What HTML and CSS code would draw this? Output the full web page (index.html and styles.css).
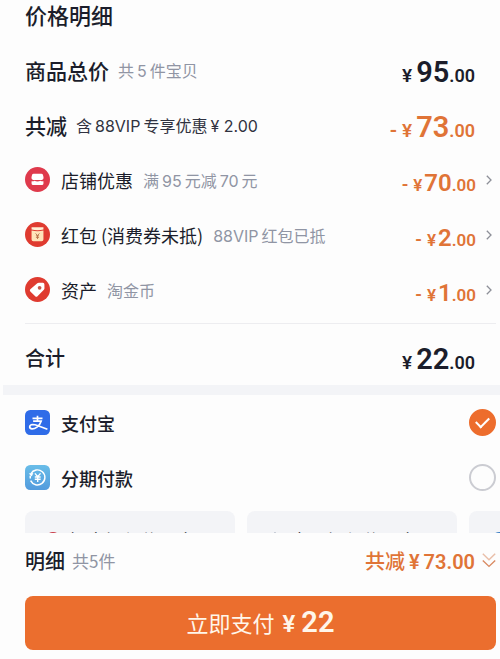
FILE: index.html
```html
<!DOCTYPE html>
<html lang="zh-CN">
<head>
<meta charset="utf-8">
<meta name="viewport" content="width=device-width, initial-scale=1">
<title>价格明细</title>
<link rel="stylesheet" href="styles.css">
</head>
<body>
<main class="content">
  <section class="prices">
    <h1 class="title">价格明细</h1>
    <div class="row">
      <span class="label">商品总价</span>
      <span class="note">共<span class="latin">5</span>件宝贝</span>
      <span class="price"><span class="yen">¥</span><span class="whole">95</span><span class="cents">.00</span></span>
    </div>
    <div class="row">
      <span class="label">共减</span>
      <span class="note note-dark">含<span class="latin">88VIP</span>专享优惠<span class="latin">¥ 2.00</span></span>
      <span class="price accent"><span class="minus">-</span><span class="yen">¥</span><span class="whole">73</span><span class="cents">.00</span></span>
    </div>
    <button class="row item" type="button">
      <svg class="icon" viewBox="0 0 24 24" aria-hidden="true">
        <circle cx="12" cy="12" r="12" fill="#df3a4c"/>
        <path d="M8.300 6.400h7.400q1.200 0 1.500 1.100l.6 2.400q.3 2.300-1.500 2.500H7.700q-1.800-.2-1.500-2.500l.6-2.400q.3-1.100 1.500-1.100z" fill="#fff"/>
        <path d="M6.300 13.600q1.500.4 2.800-.4 1.300.8 2.900.8t2.900-.8q1.300.8 2.800.4v2.200q0 1.500-1.500 1.500H7.800q-1.500 0-1.500-1.500z" fill="#fff"/>
      </svg>
      <span class="name">店铺优惠</span>
      <span class="note">满<span class="latin">95</span>元减<span class="latin">70</span>元</span>
      <span class="price accent"><span class="minus">-</span><span class="yen">¥</span><span class="whole">70</span><span class="cents">.00</span></span>
      <svg class="chevron" viewBox="0 0 6 10" aria-hidden="true"><path d="M.8.8 5 5 .8 9.200"/></svg>
    </button>
    <button class="row item" type="button">
      <svg class="icon" viewBox="0 0 24 24" aria-hidden="true">
        <circle cx="12" cy="12" r="12" fill="#df3b30"/>
        <path d="M6.300 5h11.400v2.200q-5.700 1.500-11.400 0z" fill="#fff0d6"/>
        <path d="M6.300 8.200q5.700 1.500 11.400 0v8.600q0 1.700-1.700 1.700H8q-1.700 0-1.700-1.700z" fill="#ffe4ba"/>
        <path d="m10.200 11 1.800 2 1.800-2M12 13v3.300M10.500 13.200h3M10.500 14.700h3" fill="none" stroke="#b9734a" stroke-width=".9"/>
      </svg>
      <span class="name">红包<span class="paren">(消费券未抵)</span></span>
      <span class="note"><span class="latin first">88VIP</span>红包已抵</span>
      <span class="price accent"><span class="minus">-</span><span class="yen">¥</span><span class="whole">2</span><span class="cents">.00</span></span>
      <svg class="chevron" viewBox="0 0 6 10" aria-hidden="true"><path d="M.8.8 5 5 .8 9.200"/></svg>
    </button>
    <button class="row item" type="button">
      <svg class="icon" viewBox="0 0 24 24" aria-hidden="true">
        <circle cx="12" cy="12" r="12" fill="#df3b30"/>
        <path d="M11.800 6q.6-.6 1.400-.6l4 .1q1.400.1 1.400 1.400l.1 4q0 .8-.6 1.400l-6.100 6.200q-1.100 1-2.200 0l-4.700-4.700q-1-1.100 0-2.100z" fill="#fff"/>
        <circle cx="14" cy="10.400" r="1.800" fill="#c8574b"/>
      </svg>
      <span class="name">资产</span>
      <span class="note">淘金币</span>
      <span class="price accent"><span class="minus">-</span><span class="yen">¥</span><span class="whole">1</span><span class="cents">.00</span></span>
      <svg class="chevron" viewBox="0 0 6 10" aria-hidden="true"><path d="M.8.8 5 5 .8 9.200"/></svg>
    </button>
    <div class="row total">
      <span class="label">合计</span>
      <span class="price"><span class="yen">¥</span><span class="whole">22</span><span class="cents">.00</span></span>
    </div>
  </section>

  <section class="methods">
    <label class="row method">
      <svg class="icon" viewBox="0 0 24 24" aria-hidden="true">
        <rect width="24" height="24" rx="5" fill="#2f6ce8"/>
        <path d="M7.200 8h9.600M12 5.400v5.200M7.800 10.700h7.700q-1.200 3.600-4 5.700-2.500 1.800-4.800 1.700-2.300-.2-2.200-2 .2-2 2.700-2.200 2.200 0 5.300 1.300 4.500 1.700 9 3.300" fill="none" stroke="#fff" stroke-width="1.600"/>
      </svg>
      <span class="name strong">支付宝</span>
      <input class="radio" type="radio" name="method" checked>
    </label>
    <label class="row method">
      <svg class="icon" viewBox="0 0 24 24" aria-hidden="true">
        <defs><linearGradient id="sky" x1="0" y1="0" x2="0" y2="1"><stop offset="0" stop-color="#69bde8"/><stop offset="1" stop-color="#529bdd"/></linearGradient></defs>
        <rect width="24" height="24" rx="5" fill="url(#sky)"/>
        <path d="M5.600 8.400A7.200 7.200 0 1 1 5.400 15M5.100 12.900 5 10.200" fill="none" stroke="#fff" stroke-width="1.400"/>
        <path d="M3.600 8.100 8 7.700 6.500 11z" fill="#fff"/>
        <path d="m9.500 8 2.700 3.300L14.900 8M12.200 11.200v5M9.400 11.500h5.600M9.400 13.700h5.600" fill="none" stroke="#fff" stroke-width="1.300"/>
      </svg>
      <span class="name strong">分期付款</span>
      <input class="radio" type="radio" name="method">
    </label>
    <div class="cards">
      <button class="card" type="button">
        <svg class="bank" viewBox="0 0 14 14" aria-hidden="true"><circle cx="7" cy="7" r="7" fill="#c83c48"/></svg>
        招商银行信用卡
        <svg class="chevron" viewBox="0 0 6 10" aria-hidden="true"><path d="M.8.8 5 5 .8 9.200"/></svg>
      </button>
      <button class="card" type="button">
        <svg class="bank" viewBox="0 0 14 14" aria-hidden="true"><path d="M7 0 9 5h5v2H9v7H5V7H2V5h3z" fill="#26385e"/></svg>
        交通银行信用卡
        <svg class="chevron" viewBox="0 0 6 10" aria-hidden="true"><path d="M.8.8 5 5 .8 9.200"/></svg>
      </button>
      <button class="card" type="button" aria-label="更多银行">
        <svg class="bank" viewBox="0 0 14 14" aria-hidden="true"><circle cx="9" cy="7" r="7" fill="#3d7fc4"/></svg>
      </button>
    </div>
  </section>
</main>

<footer class="footer">
  <div class="summary">
    <span class="label">明细</span>
    <span class="count">共5件</span>
    <span class="saved">共减<span class="saved-yen">¥</span><span class="saved-sum">73.00</span></span>
    <svg class="double" viewBox="0 0 14 15" aria-hidden="true"><path class="faint" d="m.8.8 6.200 6 6.200-6"/><path d="m.8 7.400 6.200 6 6.200-6"/></svg>
  </div>
  <button class="pay" type="button">立即支付<span class="pay-yen">¥</span><span class="pay-sum">22</span></button>
</footer>
</body>
</html>
```
FILE: styles.css
```css
* {
  box-sizing: border-box;
}

body {
  display: flex;
  flex-direction: column;
  height: 100vh;
  margin: 0;
  padding-left: 3px;
  background: #fdfdfd;
  color: #1b1d2b;
  font-family: "Noto Sans CJK SC", sans-serif;
}

button {
  border: 0;
  background: none;
  color: inherit;
  font-family: inherit;
  text-align: left;
}

.content {
  flex: 1;
  min-height: 0;
  overflow: auto;
  scrollbar-width: none;
}

.prices {
  padding: 0 4px 0 22px;
  border-bottom: 10px solid #f3f4f7;
}

.title {
  margin: 0;
  height: 42px;
  font-size: 22px;
  font-weight: 500;
  line-height: 28px;
}

.row {
  display: flex;
  align-items: center;
  width: 100%;
  height: 55px;
  padding: 0 21px 0 0;
  white-space: nowrap;
}

.item {
  padding-right: 4px;
}

.label {
  font-size: 21px;
  font-weight: 500;
}

.total .label,
.summary .label {
  font-size: 20px;
}

.note {
  margin-left: 9px;
  color: #9095a4;
  font-size: 16px;
}

.item .note {
  margin-left: 10px;
}

.note-dark {
  color: #303240;
}

.latin {
  margin: 0 3px;
  font-family: Inter, sans-serif;
}

.first {
  margin-left: 0;
}

.name {
  margin-left: 11px;
  font-size: 18px;
}

.strong {
  font-weight: 500;
}

.paren {
  margin-left: 4px;
}

.icon {
  flex: none;
  width: 25px;
  height: 25px;
}

.price {
  display: flex;
  align-items: baseline;
  margin-left: auto;
  padding-top: 8px;
  font-family: Roboto, sans-serif;
  font-weight: 600;
  line-height: 32px;
}

.accent {
  color: #e07437;
}

.minus {
  margin-right: 5px;
  font-size: 20px;
}

.yen {
  margin-right: 4px;
  font-size: 19px;
}

.whole {
  font-size: 29px;
}

.cents {
  font-size: 18px;
}

.item .minus {
  font-size: 18px;
}

.item .yen {
  margin-right: 2px;
  font-size: 17px;
}

.item .whole {
  font-size: 24px;
}

.item .cents {
  font-size: 17px;
}

.chevron {
  width: 6px;
  height: 10px;
  margin-left: 10px;
  fill: none;
  stroke: #8d8f98;
  stroke-width: 1.3;
}

.total {
  height: 62px;
  margin-top: 6px;
  padding-top: 5px;
  border-top: 1px solid #ededf0;
}

.methods {
  padding-left: 22px;
}

.method {
  padding-right: 4px;
}

.radio {
  display: grid;
  place-items: center;
  width: 27px;
  height: 27px;
  margin: 0 0 0 auto;
  border: 2px solid #cbccd2;
  border-radius: 50%;
  appearance: none;
}

.radio:checked {
  border-color: #ed6d2d;
  background: #ed6d2d;
}

.radio:checked::before {
  width: 11px;
  height: 6px;
  margin-bottom: 3px;
  border: solid #fff;
  border-width: 0 0 2px 2px;
  content: "";
  transform: rotate(-45deg);
}

.cards {
  display: flex;
  gap: 12px;
  margin-top: 6px;
  overflow: hidden;
}

.card {
  display: flex;
  flex: none;
  align-items: center;
  gap: 8px;
  width: 210px;
  height: 58px;
  padding: 0 20px;
  border-radius: 8px;
  background: #f3f4f7;
  font-size: 18px;
}

.card .chevron {
  width: 9px;
  height: 18px;
  margin-left: auto;
}

.bank {
  width: 16px;
  height: 20px;
}

.footer {
  flex: none;
  padding: 0 4px 9px 22px;
}

.summary {
  display: flex;
  align-items: center;
  height: 63px;
  padding-bottom: 8px;
}

.count {
  margin-left: 7px;
  color: #9095a4;
  font-size: 17px;
}

.saved {
  margin-left: auto;
  color: #e07437;
  font-size: 20px;
  font-weight: 500;
}

.saved-yen,
.saved-sum {
  font-family: Roboto, sans-serif;
  font-weight: 600;
}

.saved-yen {
  margin: 0 4px;
}

.double {
  width: 14px;
  height: 15px;
  margin-left: 7px;
  fill: none;
  stroke: #d98a62;
  stroke-width: 1.4;
}

.faint {
  opacity: .55;
}

.pay {
  display: flex;
  align-items: baseline;
  justify-content: center;
  width: 100%;
  height: 54px;
  padding: 0;
  border-radius: 8px;
  background: #eb6e2e;
  color: #fff6ea;
  font-size: 22px;
  line-height: 52px;
}

.pay-yen,
.pay-sum {
  font-family: Roboto, sans-serif;
  font-weight: 600;
}

.pay-yen {
  margin: 0 6px 0 8px;
  font-size: 24px;
}

.pay-sum {
  font-size: 29px;
}
```
